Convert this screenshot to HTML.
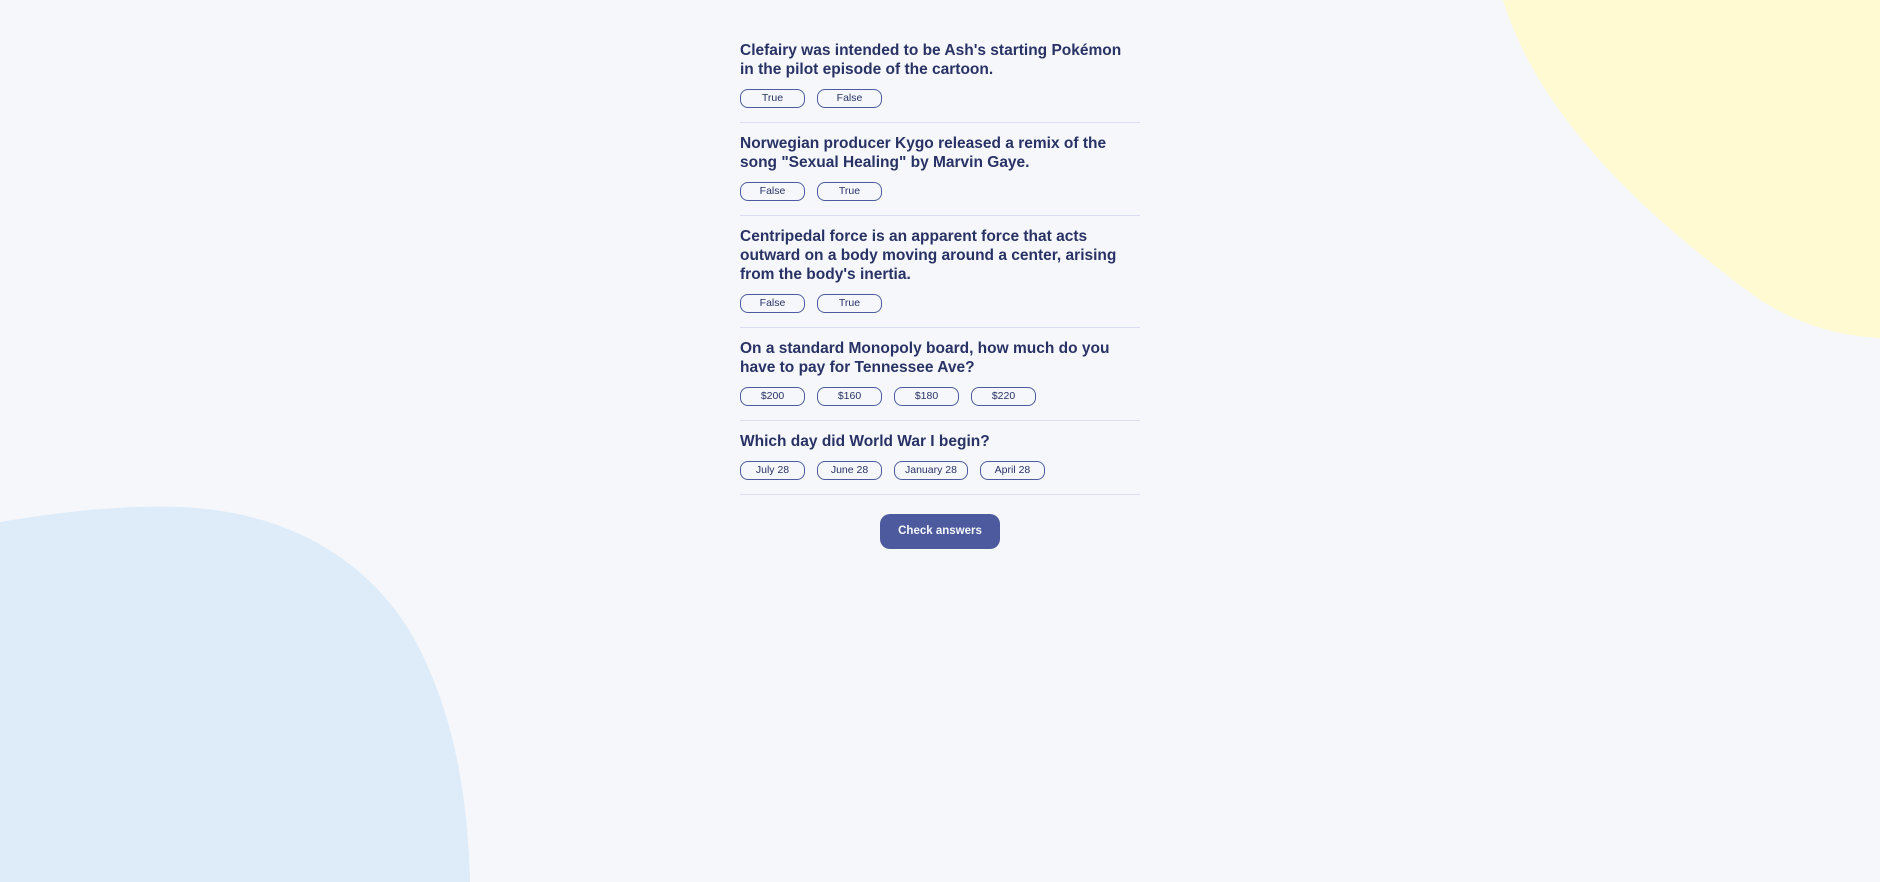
<!DOCTYPE html>
<html><head><meta charset="utf-8"><style>
html,body{margin:0;padding:0;width:1880px;height:882px;overflow:hidden;background:#f5f7fb;font-family:"Liberation Sans",sans-serif;color:#293264}
svg.bg{position:absolute;left:0;top:0}
.wrap{position:absolute;left:740px;top:41px;width:400px}
.q{font-weight:bold;font-size:15.5px;line-height:19px;margin:0;max-width:392px}
.opts{display:flex;gap:12px;margin-top:10px}
.b{box-sizing:border-box;height:19px;min-width:65px;padding:0 10px;border:1px solid #4d5b9e;border-radius:8px;font-size:10.5px;line-height:17px;text-align:center;color:#293264}
hr{border:0;border-top:1px solid #dbdef0;margin:14px 0 11px}
.chk{position:absolute;left:880px;top:514px;width:120px;height:35px;background:#4d5b9e;color:#f5f7fb;border-radius:10px;font-size:11.5px;font-weight:bold;text-align:center;line-height:35px}
</style></head><body>
<svg class="bg" width="1880" height="882"><path d="M1503,0 C1540,120 1650,220 1760,300 C1800,325 1840,336 1880,338 L1880,0 Z" fill="#fffad1"/><path d="M0,522 C60,512 120,505 180,507 C300,512 380,570 420,650 C455,720 468,800 470,882 L0,882 Z" fill="#deebf8"/></svg>
<div class="wrap">
<p class="q">Clefairy was intended to be Ash's starting Pokémon in the pilot episode of the cartoon.</p>
<div class="opts"><div class="b">True</div><div class="b">False</div></div><hr>
<p class="q">Norwegian producer Kygo released a remix of the song "Sexual Healing" by Marvin Gaye.</p>
<div class="opts"><div class="b">False</div><div class="b">True</div></div><hr>
<p class="q">Centripedal force is an apparent force that acts outward on a body moving around a center, arising from the body's inertia.</p>
<div class="opts"><div class="b">False</div><div class="b">True</div></div><hr>
<p class="q">On a standard Monopoly board, how much do you have to pay for Tennessee Ave?</p>
<div class="opts"><div class="b">$200</div><div class="b">$160</div><div class="b">$180</div><div class="b">$220</div></div><hr>
<p class="q">Which day did World War I begin?</p>
<div class="opts"><div class="b">July 28</div><div class="b">June 28</div><div class="b">January 28</div><div class="b">April 28</div></div><hr>
</div>
<div class="chk">Check answers</div>
</body></html>
